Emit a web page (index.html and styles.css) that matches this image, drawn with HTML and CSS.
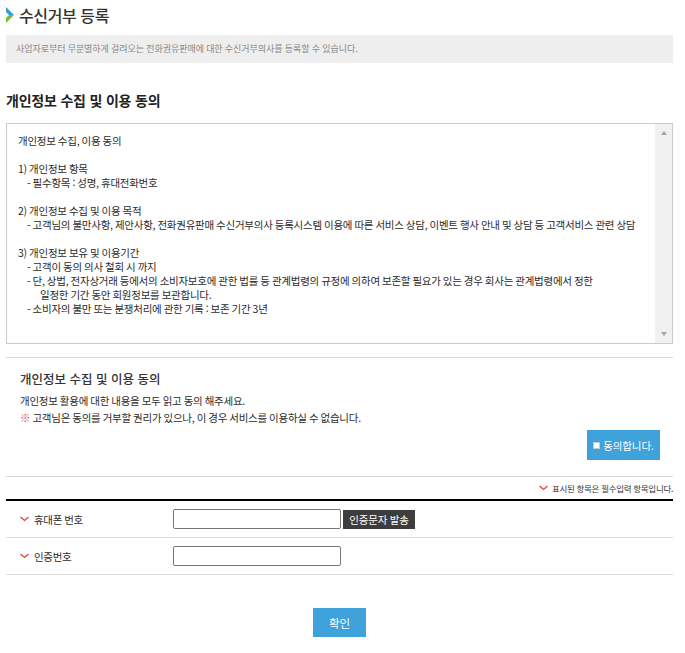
FILE: index.html
```html
<!DOCTYPE html>
<html lang="ko">
<head>
<meta charset="utf-8">
<title>수신거부 등록</title>
<link rel="stylesheet" href="styles.css">
</head>
<body>
<div class="page">
  <h1 class="title">
    <svg class="logo" width="8" height="16" viewBox="0 0 8 16"><path d="M0 0 L8 8 L3 8 L0 5Z" fill="#2f9fd8"/><path d="M0 16 L8 8 L3 8 L0 11Z" fill="#7dbb3c"/></svg>
    <span>수신거부 등록</span>
  </h1>
  <p class="notice">사업자로부터 무분별하게 걸려오는 전화권유판매에 대한 수신거부의사를 등록할 수 있습니다.</p>
  <h2 class="section">개인정보 수집 및 이용 동의</h2>
  <div class="terms">
    <div class="terms-body">
      <p class="line">개인정보 수집, 이용 동의</p>
      <p class="line blank"></p>
      <p class="line">1) 개인정보 항목</p>
      <p class="line in">- 필수항목 : 성명, 휴대전화번호</p>
      <p class="line blank"></p>
      <p class="line">2) 개인정보 수집 및 이용 목적</p>
      <p class="line in">- 고객님의 불만사항, 제안사항, 전화권유판매 수신거부의사 등록시스템 이용에 따른 서비스 상담, 이벤트 행사 안내 및 상담 등 고객서비스 관련 상담</p>
      <p class="line blank"></p>
      <p class="line">3) 개인정보 보유 및 이용기간</p>
      <p class="line in">- 고객이 동의 의사 철회 시 까지</p>
      <p class="line in">- 단, 상법, 전자상거래 등에서의 소비자보호에 관한 법률 등 관계법령의 규정에 의하여 보존할 필요가 있는 경우 회사는 관계법령에서 정한</p>
      <p class="line in2">일정한 기간 동안 회원정보를 보관합니다.</p>
      <p class="line in">- 소비자의 불만 또는 분쟁처리에 관한 기록 : 보존 기간 3년</p>
    </div>
    <div class="scrollbar"><span class="arrow up"></span><span class="arrow down"></span></div>
  </div>
  <div class="agree">
    <h3 class="agree-title">개인정보 수집 및 이용 동의</h3>
    <p class="agree-text">개인정보 활용에 대한 내용을 모두 읽고 동의 해주세요.</p>
    <p class="agree-text"><span class="mark">※</span> 고객님은 동의를 거부할 권리가 있으나, 이 경우 서비스를 이용하실 수 없습니다.</p>
    <div class="agree-action"><button class="agree-btn" type="button"><span class="box"></span>동의합니다.</button></div>
  </div>
  <div class="required">
    <svg class="check" width="9" height="6" viewBox="0 0 9 6"><path d="M0.5 1 L4.5 4.5 L8.5 1" fill="none" stroke="#e8403c" stroke-width="1.3"/></svg>
    <span>표시된 항목은 필수입력 항목입니다.</span>
  </div>
  <div class="form">
    <div class="row">
      <label class="label"><svg class="check" width="9" height="6" viewBox="0 0 9 6"><path d="M0.5 1 L4.5 4.5 L8.5 1" fill="none" stroke="#e8403c" stroke-width="1.3"/></svg>휴대폰 번호</label>
      <input class="field" type="text">
      <button class="send" type="button">인증문자 발송</button>
    </div>
    <div class="row">
      <label class="label"><svg class="check" width="9" height="6" viewBox="0 0 9 6"><path d="M0.5 1 L4.5 4.5 L8.5 1" fill="none" stroke="#e8403c" stroke-width="1.3"/></svg>인증번호</label>
      <input class="field" type="text">
    </div>
  </div>
  <div class="submit-wrap"><button class="submit" type="button">확인</button></div>
</div>
</body>
</html>
```

FILE: styles.css
```css
* { box-sizing: border-box; }
html, body { margin: 0; padding: 0; background: #fff; }
body { font-family: "Noto Sans CJK KR", "Noto Sans", sans-serif; color: #333; overflow: hidden; }
.page { width: 685px; height: 653px; padding: 0 12px 0 6px; }
.title { display: flex; align-items: center; gap: 5px; margin: 0; height: 35px; padding-bottom: 6px; font-size: 16px; font-weight: 500; color: #333; line-height: 20px; letter-spacing: -0.4px; }
.logo { display: block; }
.notice { margin: 0; height: 28px; background: #eee; padding-left: 10px; font-size: 9px; line-height: 27px; color: #888; letter-spacing: -0.05px; word-spacing: -0.2px; }
.section { margin: 27px 0 0; height: 33px; font-size: 14px; line-height: 20px; font-weight: 700; color: #222; letter-spacing: -0.2px; }
.terms { display: flex; height: 221px; border: 1px solid #ccc; }
.terms-body { flex: 1; padding: 10px 0 0 11px; font-size: 10.5px; color: #2b2b2b; letter-spacing: -0.25px; word-spacing: -0.5px; }
.line { margin: 0; height: 14px; line-height: 14px; white-space: nowrap; }
.line.blank { height: 13.9px; }
.in { padding-left: 9px; }
.in2 { padding-left: 22px; }
.scrollbar { width: 17px; background: #f1f1f1; display: flex; flex-direction: column; justify-content: space-between; align-items: center; padding: 7px 0; }
.arrow { width: 0; height: 0; border-left: 3.5px solid transparent; border-right: 3.5px solid transparent; }
.arrow.up { border-bottom: 4px solid #a3a3a3; }
.arrow.down { border-top: 4px solid #a3a3a3; }
.agree { margin-top: 13px; height: 120px; border-top: 1px solid #d9d9d9; border-bottom: 1px solid #d9d9d9; padding: 12px 13px 0 14px; }
.agree-title { margin: 0 0 4px; font-size: 12.5px; line-height: 18px; font-weight: 500; color: #333; }
.agree-text { margin: 0; font-size: 10.5px; line-height: 17px; color: #2b2b2b; white-space: nowrap; letter-spacing: -0.25px; word-spacing: -0.5px; }
.mark { color: #d9453d; }
.agree-action { display: flex; justify-content: flex-end; margin-top: 4px; }
.agree-btn { width: 73px; height: 30px; border: 0; padding: 0; background: #3fa2da; color: #fff; font: 10.5px "Noto Sans CJK KR", sans-serif; letter-spacing: -0.1px; display: flex; align-items: center; justify-content: center; gap: 3px; }
.box { width: 7px; height: 7px; background: #fff; border: 1px solid #c8c8c8; }
.required { display: flex; justify-content: flex-end; align-items: center; gap: 4px; height: 22px; font-size: 8.5px; color: #333; white-space: nowrap; letter-spacing: -0.3px; }
.form { border-top: 2px solid #000; }
.row { display: flex; align-items: center; height: 37px; border-bottom: 1px solid #ddd; }
.label { display: flex; align-items: center; gap: 5px; width: 167px; padding-left: 14px; font-size: 10.5px; color: #2b2b2b; letter-spacing: -0.3px; word-spacing: -0.5px; }
.field { width: 168px; height: 20px; border: 1px solid #767676; border-radius: 2px; background: #fff; padding: 0; margin: 0; }
.send { margin-left: 2px; height: 19px; width: 72px; padding: 0; border: 0; background: #3d3d3d; color: #fff; font: 10.5px "Noto Sans CJK KR", sans-serif; letter-spacing: -0.2px; }
.submit-wrap { display: flex; justify-content: flex-start; margin-top: 33px; padding-left: 307px; }
.submit { width: 53px; height: 29px; border: 0; padding: 0; background: #3fa2da; color: #fff; font: 11.5px "Noto Sans CJK KR", sans-serif; }
```
